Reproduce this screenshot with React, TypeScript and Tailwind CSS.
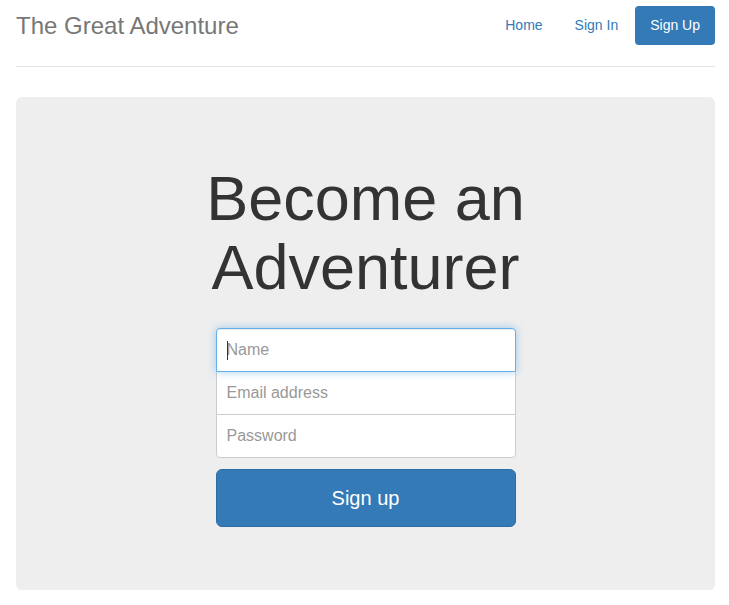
export default function App() {
  return (
    <div className="min-h-[605px] bg-white pl-4 pr-[14px] font-['Liberation_Sans',Arial,sans-serif] text-[#333]">
      <header className="flex items-center justify-between border-b border-[#e5e5e5] pt-[6px] pb-[21px]">
        <h3 className="text-[24px] leading-[39px] text-[#777]">The Great Adventure</h3>
        <nav className="flex items-center text-[14px]">
          <a href="#" className="px-[15px] leading-[39px] text-[#337ab7]">
            Home
          </a>
          <a href="#" className="ml-[2px] px-[15px] leading-[39px] text-[#337ab7]">
            Sign In
          </a>
          <a href="#" className="ml-[2px] rounded-[4px] bg-[#337ab7] px-[15px] leading-[39px] text-white">
            Sign Up
          </a>
        </nav>
      </header>

      <main className="mt-[30px] flex flex-col items-center rounded-[6px] bg-[#eee] pt-[67px] pb-[63px]">
        <h1 className="text-center text-[63px] leading-[69px] text-[#333]">
          Become an
          <br />
          Adventurer
        </h1>
        <form className="mt-[26px] flex w-[300px] flex-col">
          <div className="relative z-10">
            <input
              type="text"
              placeholder="Name"
              className="h-[44px] w-full rounded-t-[4px] border border-[#66afe9] bg-white px-[10px] text-[16px] shadow-[inset_0_1px_1px_rgba(0,0,0,0.075),0_0_8px_rgba(102,175,233,0.6)] outline-none placeholder:text-[#999]"
            />
            <span className="absolute top-[13px] left-[11px] h-[19px] w-px bg-[#333]" />
          </div>
          <input
            type="email"
            placeholder="Email address"
            className="-mt-px h-[44px] w-full border border-[#ccc] bg-white px-[10px] text-[16px] outline-none placeholder:text-[#999]"
          />
          <input
            type="password"
            placeholder="Password"
            className="-mt-px h-[44px] w-full rounded-b-[4px] border border-[#ccc] bg-white px-[10px] text-[16px] outline-none placeholder:text-[#999]"
          />
          <button
            type="button"
            className="mt-[11px] h-[58px] w-full rounded-[6px] border border-[#2e6da4] bg-[#337ab7] text-[20px] text-white"
          >
            Sign up
          </button>
        </form>
      </main>
    </div>
  );
}
